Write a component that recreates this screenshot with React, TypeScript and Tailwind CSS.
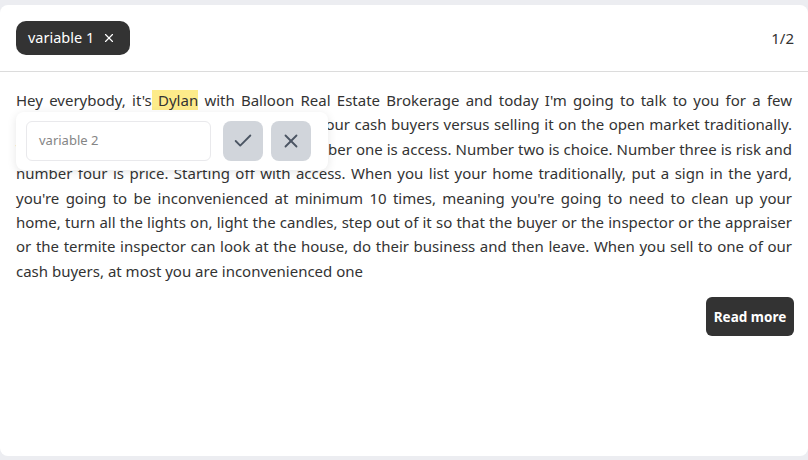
import React from "react";
import { Check, X } from "lucide-react";

export default function App() {
  return (
    <div
      className="w-[808px] h-[460px] bg-[#ecedf1] pt-[5px] overflow-hidden"
      style={{ fontFamily: '"Noto Sans", "Open Sans", sans-serif' }}
    >
      <div className="bg-white rounded-lg h-[451px] flex flex-col text-[#333]">
        <div className="flex items-center justify-between pl-4 pr-[14px] py-4 border-b border-[#dcdcdc]">
          <div className="flex items-center gap-[8px] h-[34px] pl-3 pr-[14px] rounded-[10px] bg-[#333] text-white text-[14.5px]">
            <span>variable 1</span>
            <X size={14} strokeWidth={2} />
          </div>
          <span className="text-[15px]">1/2</span>
        </div>
        <div className="relative px-4 pt-4 flex flex-col">
          <p className="text-[15px] leading-[24.4px] text-justify">
            Hey everybody, it's
            <span className="bg-[#fdeb8a]"> Dylan</span> with Balloon Real
            Estate Brokerage and today I'm going to talk to you for a few
            minutes about selling your home to one of our cash buyers versus
            selling it on the open market traditionally. There are four main
            points to consider. Number one is access. Number two is choice.
            Number three is risk and number four is price. Starting off with
            access. When you list your home traditionally, put a sign in the
            yard, you're going to be inconvenienced at minimum 10 times, meaning
            you're going to need to clean up your home, turn all the lights on,
            light the candles, step out of it so that the buyer or the inspector
            or the appraiser or the termite inspector can look at the house, do
            their business and then leave. When you sell to one of our cash
            buyers, at most you are inconvenienced one
          </p>
          <div className="flex justify-end mt-[14px] -mr-[2px]">
            <button className="h-[39px] w-[88px] rounded-md bg-[#333] text-white text-[13.5px] font-bold">
              Read more
            </button>
          </div>
          <div className="absolute left-4 top-[40px] w-[312px] h-[58px] bg-white rounded-lg shadow-[0_2px_10px_rgba(0,0,0,0.1)] flex items-center pl-[10px] gap-3">
            <div className="w-[185px] h-[40px] rounded-md border border-[#e9e9ec] flex items-center px-3 text-[13px] text-[#858585]">
              variable 2
            </div>
            <div className="flex gap-2">
              <div className="w-10 h-10 rounded-lg bg-[#d1d5db] flex items-center justify-center text-[#4b5563]">
                <Check size={22} strokeWidth={2} />
              </div>
              <div className="w-10 h-10 rounded-lg bg-[#d1d5db] flex items-center justify-center text-[#4b5563]">
                <X size={22} strokeWidth={2} />
              </div>
            </div>
          </div>
        </div>
      </div>
    </div>
  );
}
